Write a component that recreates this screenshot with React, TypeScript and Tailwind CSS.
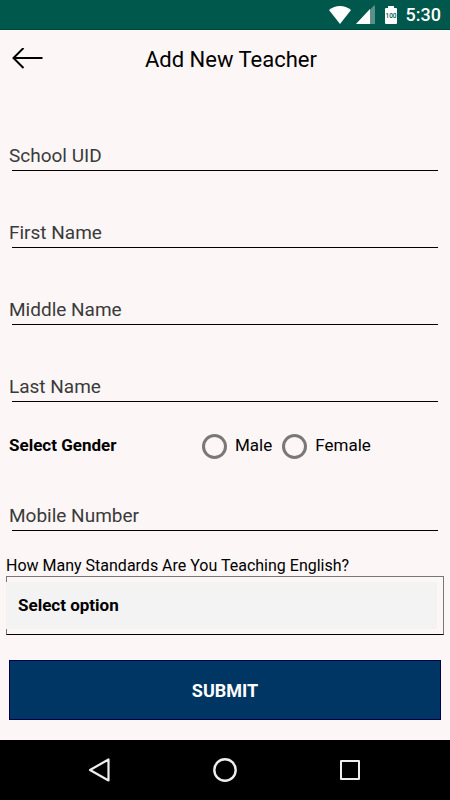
import React from "react";

interface TextFieldProps {
  label: string;
  type?: string;
}

const TextField: React.FC<TextFieldProps> = ({ label, type = "text" }) => (
  <div className="flex h-8 flex-col">
    <input
      type={type}
      aria-label={label}
      placeholder={label}
      className="min-h-0 w-full flex-1 bg-transparent pt-[3px] text-[19px] text-black outline-none placeholder:text-[#3a3a3a] placeholder:opacity-100"
    />
    <div className="ml-[3px] h-px bg-black" />
  </div>
);

const RadioOption: React.FC<{ label: string }> = ({ label }) => (
  <label className="flex items-center gap-2 text-[17px] text-black">
    <input
      type="radio"
      name="gender"
      value={label}
      className="size-[25px] appearance-none rounded-full border-[3px] border-[#7a7777] checked:bg-[#7a7777]"
    />
    {label}
  </label>
);

const StatusBar: React.FC = () => (
  <div className="flex h-[30px] items-center justify-end border-b border-[#00483a] bg-[#00574b] pr-[9px] text-white">
    {/* Wi-Fi */}
    <svg width="22" height="18" viewBox="0 0 22 18" className="mr-[5px]">
      <path d="M0 4 Q5 0 11 0 Q17 0 22 4 L11 18 Z" fill="currentColor" />
    </svg>
    {/* Signal */}
    <svg width="19" height="19" viewBox="0 0 19 19" className="mr-[10px]">
      <path d="M0 19 L18 0.500 H19 V19 Z" fill="currentColor" opacity="0.35" />
      <path d="M0 19 L14 4 V19 Z" fill="currentColor" />
    </svg>
    {/* Battery */}
    <svg width="12" height="18" viewBox="0 0 12 18" className="mr-[9px]">
      <path d="M3 0 H9 V2 H11 Q12 2 12 3 V17 Q12 18 11 18 H1 Q0 18 0 17 V3 Q0 2 1 2 H3 Z" fill="currentColor" />
      <text x="6" y="12" textAnchor="middle" fontSize="6.500" fontWeight="500" fill="#00574b">
        100
      </text>
    </svg>
    <span className="text-[18px] font-medium leading-none">5:30</span>
  </div>
);

const NavigationBar: React.FC = () => (
  <nav className="mt-auto flex h-[60px] shrink-0 items-center justify-center gap-[101px] bg-black text-[#eeeeee]">
    <button type="button" aria-label="Back">
      <svg width="24" height="24" viewBox="0 0 24 24" fill="none" stroke="currentColor" strokeWidth="2.200" strokeLinejoin="round">
        <path d="M20.500 1.500 V22.500 L2 12 Z" />
      </svg>
    </button>
    <button type="button" aria-label="Home">
      <svg width="24" height="24" viewBox="0 0 24 24" fill="none" stroke="currentColor" strokeWidth="2.400">
        <circle cx="12" cy="12" r="10.700" />
      </svg>
    </button>
    <button type="button" aria-label="Recents">
      <svg width="24" height="24" viewBox="0 0 24 24" fill="none" stroke="currentColor" strokeWidth="2" strokeLinejoin="round">
        <path d="M3 3 H21 V21 H3 Z" />
      </svg>
    </button>
  </nav>
);

const App: React.FC = () => {
  return (
    <div className="flex min-h-screen flex-col bg-[#fcf6f6] font-[Roboto,sans-serif] text-black">
      <StatusBar />

      {/* Header */}
      <header className="grid h-[58px] grid-cols-[48px_1fr_36px] items-center">
        <button type="button" aria-label="Go back" className="pl-3">
          <svg width="31" height="22" viewBox="0 0 31 22" fill="none" stroke="currentColor" strokeWidth="2">
            <path d="M1 10 H30.500 M11.500 0 L1.500 10 L11.500 20" />
          </svg>
        </button>
        <h1 className="text-center text-[22px]">Add New Teacher</h1>
      </header>

      <form className="flex flex-col pt-[51px]" onSubmit={(e) => e.preventDefault()}>
        <div className="flex flex-col gap-[45px] pl-[9px] pr-3">
          <TextField label="School UID" />
          <TextField label="First Name" />
          <TextField label="Middle Name" />
          <TextField label="Last Name" />
        </div>

        {/* Gender */}
        <div role="radiogroup" aria-labelledby="gender-label" className="mt-7 mb-[37px] flex h-8 items-center px-[9px]">
          <span id="gender-label" className="w-[193px] text-[17px] font-bold">
            Select Gender
          </span>
          <div className="flex gap-[10px]">
            <RadioOption label="Male" />
            <RadioOption label="Female" />
          </div>
        </div>

        <div className="pl-[9px] pr-3">
          <TextField label="Mobile Number" type="tel" />
        </div>

        {/* Standards */}
        <div className="mt-6 px-[6px]">
          <label htmlFor="standards" className="block text-[16px] leading-[21px]">
            How Many Standards Are You Teaching English?
          </label>
          <div className="border border-b-black border-l-[#777777] border-r-[#777777] border-t-[#777777] py-[5px] pr-[5px]">
            <select
              id="standards"
              className="-ml-px block h-[47px] w-full appearance-none bg-[#f3f3f3] pl-3 text-[17px] font-bold outline-none"
            >
              <option>Select option</option>
            </select>
          </div>
        </div>

        <div className="px-[9px] pt-[25px] pb-5">
          <button
            type="submit"
            className="h-[60px] w-full border border-[#000050] bg-[#003663] text-[18px] font-bold text-white"
          >
            SUBMIT
          </button>
        </div>
      </form>

      <NavigationBar />
    </div>
  );
};

export default App;
